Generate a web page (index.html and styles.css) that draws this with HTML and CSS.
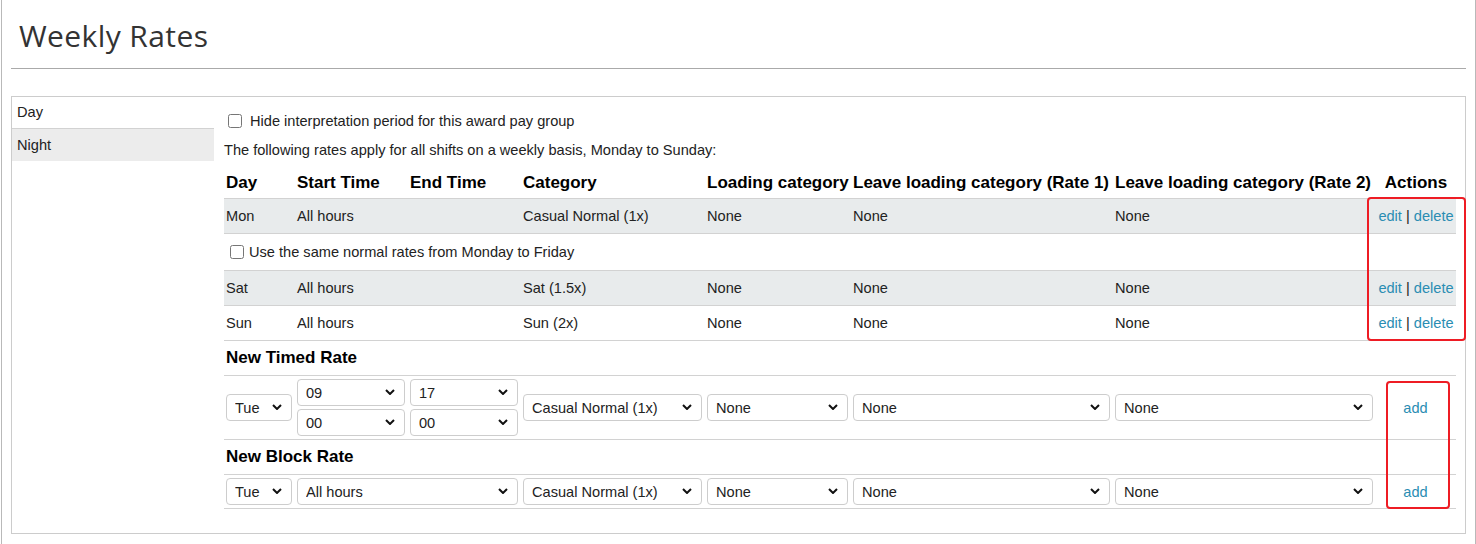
FILE: index.html
```html
<!DOCTYPE html>
<html lang="en">
<head>
    <meta charset="UTF-8">
    <meta name="viewport" content="width=device-width, initial-scale=1.0">
    <title>Weekly Rates</title>
    <link rel="stylesheet" href="styles.css">
</head>
<body>
    <div class="page">
        <h1 class="page-title">Weekly Rates</h1>

        <div class="panel">
            <ul class="shift-nav">
                <li class="nav-item">Day</li>
                <li class="nav-item active">Night</li>
            </ul>

            <div class="rates">
                <label class="check-line">
                    <input type="checkbox">
                    <span>Hide interpretation period for this award pay group</span>
                </label>
                <p class="intro">The following rates apply for all shifts on a weekly basis, Monday to Sunday:</p>

                <table class="rate-table">
                    <colgroup>
                        <col style="width: 71px">
                        <col style="width: 113px">
                        <col style="width: 113px">
                        <col style="width: 184px">
                        <col style="width: 146px">
                        <col style="width: 262px">
                        <col style="width: 263px">
                        <col style="width: 80px">
                    </colgroup>
                    <thead>
                        <tr>
                            <th>Day</th>
                            <th>Start Time</th>
                            <th>End Time</th>
                            <th>Category</th>
                            <th>Loading category</th>
                            <th>Leave loading category (Rate 1)</th>
                            <th>Leave loading category (Rate 2)</th>
                            <th class="col-actions">Actions</th>
                        </tr>
                    </thead>
                    <tbody>
                        <tr class="rate-row shaded">
                            <td>Mon</td>
                            <td>All hours</td>
                            <td></td>
                            <td>Casual Normal (1x)</td>
                            <td>None</td>
                            <td>None</td>
                            <td>None</td>
                            <td class="col-actions"><a href="#">edit</a> | <a href="#">delete</a></td>
                        </tr>
                        <tr class="check-row">
                            <td colspan="8">
                                <label class="check-line small">
                                    <input type="checkbox">
                                    <span>Use the same normal rates from Monday to Friday</span>
                                </label>
                            </td>
                        </tr>
                        <tr class="rate-row shaded">
                            <td>Sat</td>
                            <td>All hours</td>
                            <td></td>
                            <td>Sat (1.5x)</td>
                            <td>None</td>
                            <td>None</td>
                            <td>None</td>
                            <td class="col-actions"><a href="#">edit</a> | <a href="#">delete</a></td>
                        </tr>
                        <tr class="rate-row">
                            <td>Sun</td>
                            <td>All hours</td>
                            <td></td>
                            <td>Sun (2x)</td>
                            <td>None</td>
                            <td>None</td>
                            <td>None</td>
                            <td class="col-actions"><a href="#">edit</a> | <a href="#">delete</a></td>
                        </tr>

                        <tr class="section-row">
                            <td colspan="8">New Timed Rate</td>
                        </tr>
                        <tr class="input-row">
                            <td>
                                <div class="select-wrap">
                                    <select><option>Tue</option></select>
                                    <svg class="chev" viewBox="0 0 10 6"><path d="M1 1l4 4 4-4"/></svg>
                                </div>
                            </td>
                            <td>
                                <div class="select-wrap">
                                    <select><option>09</option></select>
                                    <svg class="chev" viewBox="0 0 10 6"><path d="M1 1l4 4 4-4"/></svg>
                                </div>
                                <div class="select-wrap stacked">
                                    <select><option>00</option></select>
                                    <svg class="chev" viewBox="0 0 10 6"><path d="M1 1l4 4 4-4"/></svg>
                                </div>
                            </td>
                            <td>
                                <div class="select-wrap">
                                    <select><option>17</option></select>
                                    <svg class="chev" viewBox="0 0 10 6"><path d="M1 1l4 4 4-4"/></svg>
                                </div>
                                <div class="select-wrap stacked">
                                    <select><option>00</option></select>
                                    <svg class="chev" viewBox="0 0 10 6"><path d="M1 1l4 4 4-4"/></svg>
                                </div>
                            </td>
                            <td>
                                <div class="select-wrap">
                                    <select><option>Casual Normal (1x)</option></select>
                                    <svg class="chev" viewBox="0 0 10 6"><path d="M1 1l4 4 4-4"/></svg>
                                </div>
                            </td>
                            <td>
                                <div class="select-wrap">
                                    <select><option>None</option></select>
                                    <svg class="chev" viewBox="0 0 10 6"><path d="M1 1l4 4 4-4"/></svg>
                                </div>
                            </td>
                            <td>
                                <div class="select-wrap">
                                    <select><option>None</option></select>
                                    <svg class="chev" viewBox="0 0 10 6"><path d="M1 1l4 4 4-4"/></svg>
                                </div>
                            </td>
                            <td>
                                <div class="select-wrap">
                                    <select><option>None</option></select>
                                    <svg class="chev" viewBox="0 0 10 6"><path d="M1 1l4 4 4-4"/></svg>
                                </div>
                            </td>
                            <td class="col-actions"><a href="#">add</a></td>
                        </tr>

                        <tr class="section-row">
                            <td colspan="8">New Block Rate</td>
                        </tr>
                        <tr class="input-row">
                            <td>
                                <div class="select-wrap">
                                    <select><option>Tue</option></select>
                                    <svg class="chev" viewBox="0 0 10 6"><path d="M1 1l4 4 4-4"/></svg>
                                </div>
                            </td>
                            <td colspan="2">
                                <div class="select-wrap">
                                    <select><option>All hours</option></select>
                                    <svg class="chev" viewBox="0 0 10 6"><path d="M1 1l4 4 4-4"/></svg>
                                </div>
                            </td>
                            <td>
                                <div class="select-wrap">
                                    <select><option>Casual Normal (1x)</option></select>
                                    <svg class="chev" viewBox="0 0 10 6"><path d="M1 1l4 4 4-4"/></svg>
                                </div>
                            </td>
                            <td>
                                <div class="select-wrap">
                                    <select><option>None</option></select>
                                    <svg class="chev" viewBox="0 0 10 6"><path d="M1 1l4 4 4-4"/></svg>
                                </div>
                            </td>
                            <td>
                                <div class="select-wrap">
                                    <select><option>None</option></select>
                                    <svg class="chev" viewBox="0 0 10 6"><path d="M1 1l4 4 4-4"/></svg>
                                </div>
                            </td>
                            <td>
                                <div class="select-wrap">
                                    <select><option>None</option></select>
                                    <svg class="chev" viewBox="0 0 10 6"><path d="M1 1l4 4 4-4"/></svg>
                                </div>
                            </td>
                            <td class="col-actions"><a href="#">add</a></td>
                        </tr>
                    </tbody>
                </table>
            </div>

            <!-- review markers drawn over the action column -->
            <div class="mark mark-edit"></div>
            <div class="mark mark-add"></div>
        </div>
    </div>
</body>
</html>
```

FILE: styles.css
```css
:root {
    --text-color: #222;
    --line-color: #d2d2d2;
    --row-shade: #e8ebec;
    --link-color: #2a8db3;
    --mark-color: #ee1c24;
}

* {
    box-sizing: border-box;
}

body {
    margin: 0;
    font-family: "Liberation Sans", Arial, sans-serif;
    font-size: 14.6px;
    color: var(--text-color);
    background: #fff;
}

.page {
    margin-left: 1px;
    width: 1475px;
    min-height: 544px;
    border-left: 1px solid #b9b9b9;
    border-right: 1px solid #b9b9b9;
    padding: 0 9px;
}

.page-title {
    margin: 0;
    padding: 16px 0 12px 8px;
    font-family: "Open Sans", sans-serif;
    font-weight: 400;
    font-size: 30px;
    letter-spacing: 0.4px;
    line-height: 40px;
    color: #333;
    border-bottom: 1px solid #aaa;
}

.panel {
    position: relative;
    display: flex;
    margin-top: 27px;
    border: 1px solid #ccc;
}

.shift-nav {
    list-style: none;
    margin: 0 10px 0 0;
    padding: 0;
    width: 202px;
    flex-shrink: 0;
}

.nav-item {
    height: 31px;
    line-height: 31px;
    padding: 0 5px;
}

.nav-item:first-child {
    height: 32px;
    border-bottom: 1px solid var(--line-color);
}

.nav-item.active {
    height: 32px;
    line-height: 33px;
    background-color: #ececec;
}

.rates {
    flex-grow: 1;
    padding: 14px 9px 24px 0;
}

.check-line {
    display: flex;
    align-items: center;
    height: 20px;
}

.check-line input {
    width: 14px;
    height: 14px;
    margin: 0 8px 0 4px;
}

.check-line.small input {
    margin: 0 5px 0 4px;
}

.intro {
    margin: 9px 0 0;
    line-height: 20px;
}

.rate-table {
    margin-top: 8px;
    width: 100%;
    table-layout: fixed;
    border-collapse: collapse;
}

.rate-table tr {
    border-bottom: 1px solid var(--line-color);
}

.rate-table th {
    text-align: left;
    font-size: 17px;
    font-weight: bold;
    color: #000;
    padding: 6px 2px;
    line-height: 18px;
    white-space: nowrap;
}

.rate-table td {
    padding: 8px 2px;
    line-height: 18px;
    white-space: nowrap;
}

.rate-row.shaded td {
    background-color: var(--row-shade);
}

.rate-table .check-row td {
    padding: 8px 2px;
}

.section-row td {
    font-size: 17px;
    font-weight: bold;
    color: #000;
}

.rate-table .input-row td {
    padding: 3px 3px 3px 2px;
    vertical-align: middle;
}

.rate-table .col-actions {
    text-align: center;
    padding-left: 0;
    padding-right: 0;
}

a {
    color: var(--link-color);
    text-decoration: none;
}

.select-wrap {
    position: relative;
}

.select-wrap.stacked {
    margin-top: 3px;
}

.select-wrap select {
    display: block;
    width: 100%;
    height: 27px;
    margin: 0;
    padding: 0 24px 0 8px;
    font-family: inherit;
    font-size: 14.6px;
    color: var(--text-color);
    background: #fff;
    border: 1px solid #cdcdcd;
    border-radius: 4px;
    appearance: none;
    -webkit-appearance: none;
}

.chev {
    position: absolute;
    right: 10px;
    top: 10px;
    width: 10px;
    height: 6px;
    fill: none;
    stroke: #111;
    stroke-width: 2;
    pointer-events: none;
}

.mark {
    position: absolute;
    border: 2px solid var(--mark-color);
    border-radius: 4px;
}

.mark-edit {
    left: 1355px;
    top: 100px;
    width: 99px;
    height: 144px;
}

.mark-add {
    left: 1374px;
    top: 284px;
    width: 64px;
    height: 128px;
}
```
